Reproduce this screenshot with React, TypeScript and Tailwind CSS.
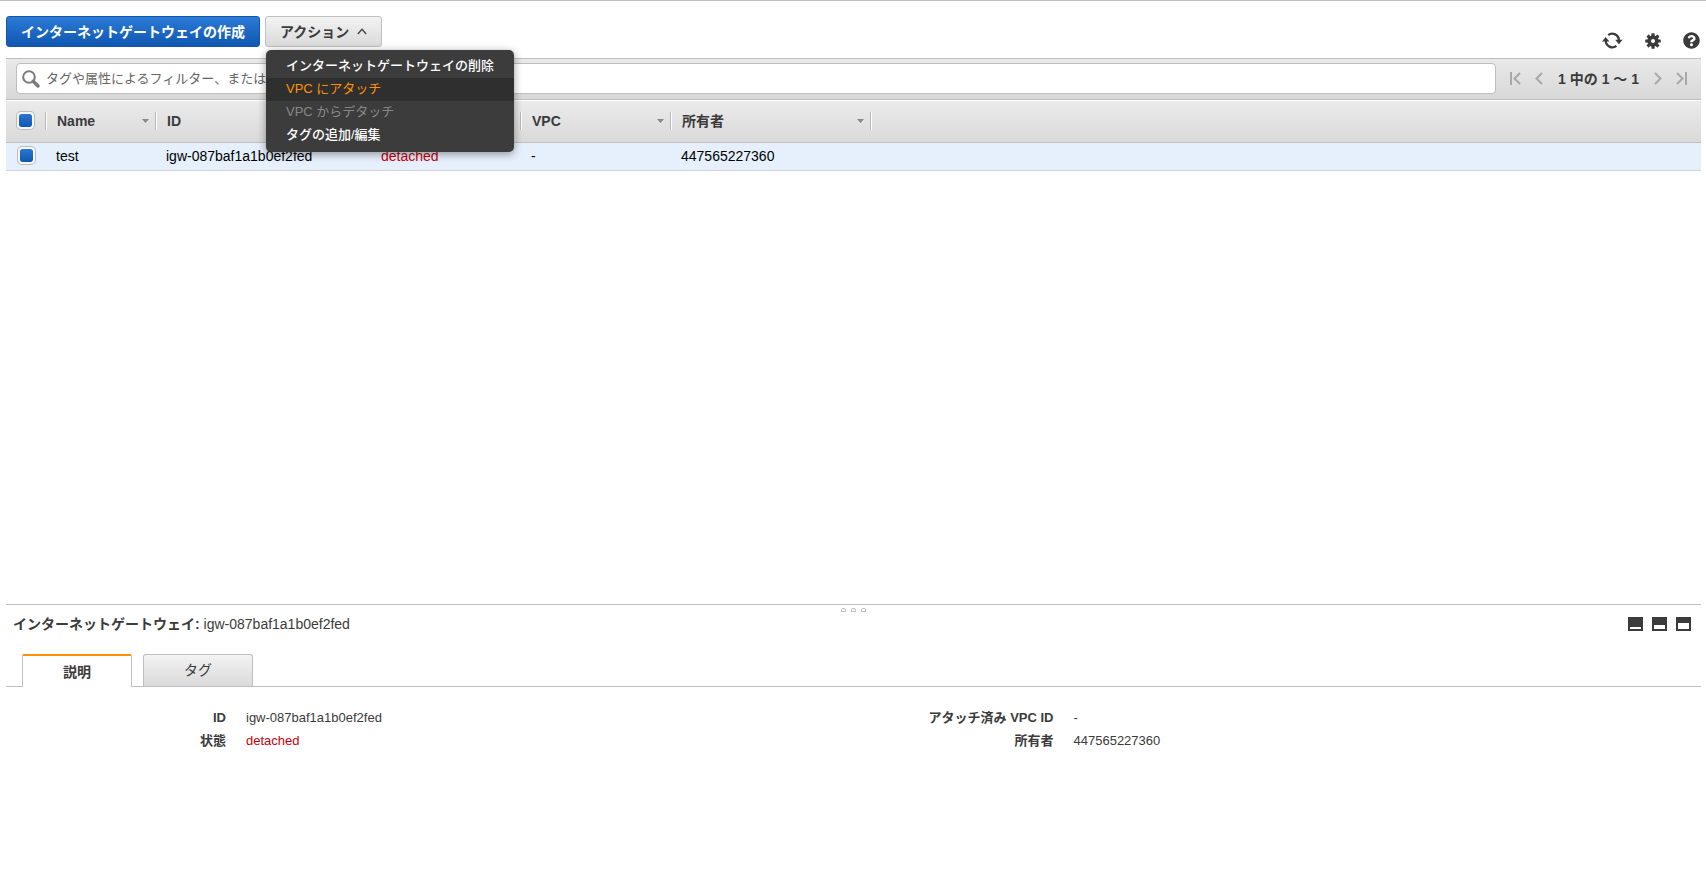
import { useState } from 'react'
import { FaQuestionCircle } from 'react-icons/fa'

const columns = [
  { id: 'name', label: 'Name', width: 'w-[110px]' },
  { id: 'id', label: 'ID', width: 'w-[215px]' },
  { id: 'state', label: '', width: 'w-[150px]' },
  { id: 'vpc', label: 'VPC', width: 'w-[150px]' },
  { id: 'owner', label: '所有者', width: 'w-[200px]' }
]

const menuItems = [
  { label: 'インターネットゲートウェイの削除', style: 'text-white font-medium' },
  { label: 'VPC にアタッチ', style: 'bg-[#2f2f2f] text-[#ff9100]' },
  { label: 'VPC からデタッチ', style: 'text-[#888]', disabled: true },
  { label: 'タグの追加/編集', style: 'text-white font-medium' }
]

const details = [
  [
    { label: 'ID', value: 'igw-087baf1a1b0ef2fed' },
    { label: '状態', value: 'detached', red: true }
  ],
  [
    { label: 'アタッチ済み VPC ID', value: '-' },
    { label: '所有者', value: '447565227360' }
  ]
]

const RefreshIcon = () => (
  <svg width="21" height="17" viewBox="0 0 21 17" fill="none">
    <path d="M6.2 3.2A6.5 6.5 0 0 1 16.8 8.4" stroke="#3b3b3b" strokeWidth="2.3" />
    <path d="M14.4 13.8A6.5 6.5 0 0 1 3.8 8.6" stroke="#3b3b3b" strokeWidth="2.3" />
    <path d="M13.2 7.8h7.4L16.9 12.2z" fill="#3b3b3b" />
    <path d="M0 9.4h7.4L3.7 5z" fill="#3b3b3b" />
  </svg>
)

const GearIcon = () => (
  <svg width="16" height="16" viewBox="-8 -8 16 16" fill="#3b3b3b">
    {[0, 45, 90, 135].map((angle) => (
      <rect key={angle} x="-1.6" y="-7.8" width="3.2" height="15.6" rx="0.6" transform={`rotate(${angle})`} />
    ))}
    <circle r="5.7" />
    <circle r="2" fill="#fff" />
  </svg>
)

const SearchIcon = () => (
  <svg width="18" height="18" viewBox="0 0 18 18" fill="none" stroke="#7b7b7b">
    <circle cx="7" cy="7" r="5.8" strokeWidth="2" />
    <path d="M11.2 11.2L16 16" strokeWidth="3.4" strokeLinecap="round" />
  </svg>
)

const PageIcon = ({ d, width }: { d: string; width: number }) => (
  <svg width={width} height="13" viewBox={`0 0 ${width} 13`} fill="none" stroke="#a9a9a9" strokeWidth="2">
    <path d={d} />
  </svg>
)

const PanelIcon = ({ top }: { top: number }) => (
  <svg width="15" height="14" viewBox="0 0 15 14">
    <rect width="15" height="14" fill="#3b3b3b" />
    <rect x="2" y={top} width="11" height={12 - top} fill="#fff" />
  </svg>
)

const Checkbox = ({ label }: { label: string }) => (
  <input
    type="checkbox"
    defaultChecked
    aria-label={label}
    className="block size-[17px] appearance-none rounded-[4px] border-2 border-[#f6f6f6] bg-white bg-clip-padding ring-1 ring-[#bcbcbc] checked:bg-linear-to-b checked:from-[#2a76d2] checked:to-[#0f58b0]"
  />
)

const Separator = () => <span className="h-[18px] w-[2px] border-r border-l border-r-white border-l-[#b8b8b8]" />

const App = () => {
  const [open, setOpen] = useState(true)

  return (
    <div className="flex min-h-screen flex-col border-t border-[#bfbfbf] bg-white pr-[5px] pl-[6px] font-['Liberation_Sans','Noto_Sans_CJK_JP',sans-serif] text-sm text-[#3b3b3b]">
      <header className="flex items-end justify-between pt-[15px] pr-px pb-[9px]">
        <div className="flex gap-[5px] pb-[2px]">
          <button className="h-[31px] rounded-[3px] border border-[#1556a6] bg-linear-to-b from-[#2b7bd8] to-[#0f57b0] px-[14px] font-bold text-white">
            インターネットゲートウェイの作成
          </button>
          <div className="relative">
            <button
              aria-expanded={open}
              onClick={() => setOpen(!open)}
              className="flex h-[31px] items-center gap-2 rounded-[3px] border border-[#c0c0c0] bg-linear-to-b from-[#f3f3f3] to-[#dadada] px-[14px] font-bold"
            >
              アクション
              <svg width="10" height="7" viewBox="0 0 10 7" fill="none" stroke="#444" strokeWidth="1.4">
                <path d="M0.8 6L5 1.4L9.2 6" />
              </svg>
            </button>
            {open && (
              <ul className="absolute top-[34px] left-px z-10 w-[248px] rounded-[5px] bg-[#3c3c3c] py-[5px] shadow-[0_2px_8px_rgba(0,0,0,0.4)]">
                {menuItems.map((item) => (
                  <li key={item.label}>
                    <button
                      disabled={item.disabled}
                      className={`block h-[23px] w-full px-5 pb-[2px] text-left text-[13px] leading-[21px] whitespace-nowrap ${item.style}`}
                    >
                      {item.label}
                    </button>
                  </li>
                ))}
              </ul>
            )}
          </div>
        </div>
        <div className="flex items-center gap-[22px]">
          <button aria-label="更新">
            <RefreshIcon />
          </button>
          <button aria-label="設定">
            <GearIcon />
          </button>
          <button aria-label="ヘルプ">
            <FaQuestionCircle size={17} color="#3b3b3b" />
          </button>
        </div>
      </header>

      <div className="flex items-center gap-[14px] border-y border-[#bfbfbf] bg-linear-to-b from-[#e9e9e9] to-[#d8d8d8] pt-[4px] pr-[14px] pb-[5px] pl-[10px]">
        <label className="flex h-[31px] flex-1 items-center gap-[6px] rounded-[4px] border border-[#bfbfbf] bg-white pl-[5px]">
          <SearchIcon />
          <input
            type="text"
            aria-label="フィルター"
            placeholder="タグや属性によるフィルター、またはキーワードによる検索"
            className="h-full flex-1 text-[13px] outline-none placeholder:text-[#666]"
          />
        </label>
        <nav className="flex items-center">
          <button aria-label="最初のページ">
            <PageIcon width={11} d="M1 0V13M10 1L4.5 6.5L10 12" />
          </button>
          <button aria-label="前のページ" className="ml-[14px]">
            <PageIcon width={8} d="M7 1L1.5 6.5L7 12" />
          </button>
          <span className="mx-[15px] font-bold">1 中の 1 〜 1</span>
          <button aria-label="次のページ">
            <PageIcon width={8} d="M1 1L6.5 6.5L1 12" />
          </button>
          <button aria-label="最後のページ" className="ml-[14px]">
            <PageIcon width={11} d="M10 0V13M1 1L6.5 6.5L1 12" />
          </button>
        </nav>
      </div>

      <main className="flex-1 pt-px">
        <table className="w-full table-fixed border-separate border-spacing-0">
          <thead>
            <tr className="h-[42px] bg-linear-to-b from-[#ebebeb] to-[#d9d9d9] [&>th]:border-b [&>th]:border-[#bfbfbf] [&>th]:p-0 [&>th]:pb-[2px]">
              <th className="w-[41px]">
                <div className="flex items-center justify-between pl-[11px]">
                  <Checkbox label="すべて選択" />
                  <Separator />
                </div>
              </th>
              {columns.map((column) => (
                <th key={column.id} className={column.width}>
                  <div className="flex items-center gap-[6px] pl-[10px]">
                    <span className="flex-1 text-left">{column.label}</span>
                    <svg width="7" height="4" viewBox="0 0 7 4" fill="#888">
                      <path d="M0 0h7L3.5 4z" />
                    </svg>
                    <Separator />
                  </div>
                </th>
              ))}
              <th />
            </tr>
          </thead>
          <tbody>
            <tr className="h-[28px] bg-[#e6f0fc] text-black [&>td]:border-b [&>td]:border-[#d2d6dc] [&>td]:p-0 [&>td]:pb-[2px] [&>td]:pl-[9px]">
              <td>
                <div className="pl-[3px]">
                  <Checkbox label="test を選択" />
                </div>
              </td>
              <td>test</td>
              <td>igw-087baf1a1b0ef2fed</td>
              <td className="text-[#c7000b]">detached</td>
              <td>-</td>
              <td>447565227360</td>
              <td />
            </tr>
          </tbody>
        </table>
      </main>

      <section className="min-h-[272px] border-t border-[#bfbfbf]">
        <div className="flex h-[7px] items-end justify-center gap-[5px]">
          {[0, 1, 2].map((dot) => (
            <span key={dot} className="h-[4px] w-[5px] rounded-t-[2px] border border-[#bdbdbd]" />
          ))}
        </div>
        <div className="flex items-center justify-between pr-[10px] pl-[7px]">
          <h2 className="leading-6">
            <b>インターネットゲートウェイ:</b> igw-087baf1a1b0ef2fed
          </h2>
          <div className="flex gap-[9px]">
            <button aria-label="最小化">
              <PanelIcon top={10} />
            </button>
            <button aria-label="分割表示">
              <PanelIcon top={8} />
            </button>
            <button aria-label="最大化">
              <PanelIcon top={6} />
            </button>
          </div>
        </div>
        <div role="tablist" className="mt-[18px] flex items-end border-b border-[#bfbfbf] pl-4">
          <button
            role="tab"
            aria-selected="true"
            className="-mb-px h-[33px] w-[110px] rounded-t-[2px] border-x border-t-2 border-x-[#bfbfbf] border-t-[#ff9100] bg-white font-bold"
          >
            説明
          </button>
          <button
            role="tab"
            aria-selected="false"
            className="ml-[11px] h-[32px] w-[110px] rounded-t-[3px] border border-b-0 border-[#bfbfbf] bg-linear-to-b from-[#f3f3f3] to-[#dadada] pb-[2px]"
          >
            タグ
          </button>
        </div>
        <div className="grid grid-cols-2 pt-[19px] pr-10 text-[13px] leading-[23px]">
          {details.map((group) => (
            <dl key={group[0].label}>
              {group.map((item) => (
                <div key={item.label} className="flex gap-5">
                  <dt className="w-[220px] text-right font-bold">{item.label}</dt>
                  <dd className={item.red ? 'text-[#c7000b]' : ''}>{item.value}</dd>
                </div>
              ))}
            </dl>
          ))}
        </div>
      </section>
    </div>
  )
}

export default App
